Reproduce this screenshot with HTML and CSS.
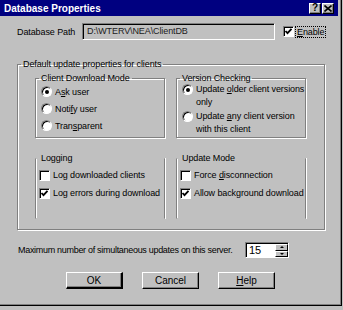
FILE: index.html
```html
<!DOCTYPE html>
<html>
<head>
  <link rel="stylesheet" href="styles.css">
</head>
<body>
  <div class="dialog">
    <div class="titlebar">
      <span class="title">Database Properties</span>
      <span class="tb-btn">?</span>
      <span class="tb-btn close-btn">
        <svg width="8" height="7" viewBox="0 0 8 7"><path d="M0.5 0.5 L7.5 6.5 M7.5 0.5 L0.5 6.5" stroke="#000" stroke-width="1.6"/></svg>
      </span>
    </div>

    <div class="path-row">
      <span class="path-label">Database Path</span>
      <div class="edit path-edit">D:\WTERV\NEA\ClientDB</div>
      <span class="check enable-check">
        <svg width="9" height="9" viewBox="0 0 9 9"><path d="M1.5 4 L3.5 6.2 L7.5 1.8" fill="none" stroke="#000" stroke-width="1.8"/></svg>
      </span>
      <span class="focus-label"><u>E</u>nable</span>
    </div>

    <fieldset class="group outer-group">
      <legend>Default update properties for clients</legend>
      <div class="group-grid">
        <fieldset class="group inner-group">
          <legend>Client Download Mode</legend>
          <div class="options">
            <div class="opt"><span class="radio on"></span><span>A<u>s</u>k user</span></div>
            <div class="opt"><span class="radio"></span><span>Noti<u>f</u>y user</span></div>
            <div class="opt"><span class="radio"></span><span>Tran<u>s</u>parent</span></div>
          </div>
        </fieldset>

        <fieldset class="group inner-group">
          <legend>Version Checking</legend>
          <div class="options">
            <div class="opt tall"><span class="radio on"></span><span>Update <u>o</u>lder client versions<br>only</span></div>
            <div class="opt tall"><span class="radio"></span><span>Update <u>a</u>ny client version<br>with this client</span></div>
          </div>
        </fieldset>

        <fieldset class="group inner-group open">
          <legend>Logging</legend>
          <div class="options checks">
            <div class="opt"><span class="check"></span><span>Log downloaded clients</span></div>
            <div class="opt">
              <span class="check">
                <svg width="9" height="9" viewBox="0 0 9 9"><path d="M1.5 4 L3.5 6.2 L7.5 1.8" fill="none" stroke="#000" stroke-width="1.8"/></svg>
              </span>
              <span>Log errors during download</span>
            </div>
          </div>
        </fieldset>

        <fieldset class="group inner-group open">
          <legend>Update Mode</legend>
          <div class="options checks">
            <div class="opt"><span class="check"></span><span>Force <u>d</u>isconnection</span></div>
            <div class="opt">
              <span class="check">
                <svg width="9" height="9" viewBox="0 0 9 9"><path d="M1.5 4 L3.5 6.2 L7.5 1.8" fill="none" stroke="#000" stroke-width="1.8"/></svg>
              </span>
              <span>Allow back<u>g</u>round download</span>
            </div>
          </div>
        </fieldset>
      </div>
    </fieldset>

    <div class="max-row">
      <span class="max-label">Maximum number of simultaneous updates on this server.</span>
      <div class="spin">
        <span class="spin-value">15</span>
        <span class="spin-btns">
          <span class="spin-btn"><i class="arrow up"></i></span>
          <span class="spin-btn"><i class="arrow down"></i></span>
        </span>
      </div>
    </div>

    <div class="button-row">
      <button class="btn default">OK</button>
      <button class="btn">Cancel</button>
      <button class="btn"><u>H</u>elp</button>
    </div>
  </div>
</body>
</html>
```

FILE: styles.css
```css
* {
  box-sizing: border-box;
}

body {
  margin: 0;
  background: #c0c0c0;
  font-family: "Liberation Sans", Arial, sans-serif;
  font-size: 9px;
  letter-spacing: -0.1px;
  color: #000;
}

.dialog {
  width: 342px;
  height: 306px;
  border-right: 1px solid #000;
  border-bottom: 1px solid #000;
  box-shadow: inset -1px -1px 0 #808080;
}

.titlebar {
  width: 338px;
  height: 16px;
  background: #000080;
  display: flex;
  align-items: center;
  padding: 0 4px;
}

.title {
  flex: 1;
  color: #fff;
  font-weight: bold;
  font-size: 10px;
  letter-spacing: 0;
}

.tb-btn {
  width: 12px;
  height: 11px;
  background: #c0c0c0;
  border: 1px solid;
  border-color: #fff #000 #000 #fff;
  box-shadow: inset -1px -1px 0 #808080;
  display: flex;
  align-items: center;
  justify-content: center;
  font-weight: bold;
  font-size: 10px;
  line-height: 1;
}

.close-btn {
  margin-left: 1px;
}

/* path row */
.path-row {
  display: flex;
  align-items: center;
  height: 17px;
  margin-top: 7px;
  padding-left: 17px;
  white-space: nowrap;
}

.path-label {
  width: 65px;
}

.edit {
  border: 1px solid;
  border-color: #808080 #fff #fff #808080;
  box-shadow: inset 1px 1px 0 #000;
}

.path-edit {
  width: 193px;
  height: 17px;
  padding-left: 4px;
  line-height: 15px;
  color: #202020;
}

.check {
  width: 11px;
  height: 11px;
  flex: none;
  background: #fff;
  border: 1px solid;
  border-color: #808080 #fff #fff #808080;
  box-shadow: inset 1px 1px 0 #000;
  display: flex;
  align-items: center;
  justify-content: center;
}

.enable-check {
  margin-left: 8px;
}

.focus-label {
  margin-left: 2px;
  padding: 0 1px;
  outline: 1px dotted #000;
}

/* group boxes */
.group {
  margin: 0;
  padding: 0;
  min-width: 0;
  border: 1px solid #808080;
  box-shadow: 1px 1px 0 #fff, inset 1px 1px 0 #fff;
}

.group legend {
  margin-left: 3px;
  padding: 0 2px;
  line-height: 10px;
}

.outer-group {
  width: 308px;
  height: 171px;
  margin: 19px 0 0 17px;
}

.group-grid {
  display: grid;
  grid-template-columns: 130px 130px;
  column-gap: 11px;
  row-gap: 15px;
  margin: 4px 0 0 17px;
}

.inner-group {
  height: 65px;
}

.inner-group.open {
  height: 66px;
  border-top-color: transparent;
  border-bottom-color: transparent;
  box-shadow: 1px 0 0 #fff, inset 1px 0 0 #fff;
}

.options {
  padding-left: 5px;
}

.opt {
  display: flex;
  align-items: center;
  gap: 3px;
  height: 17px;
  white-space: nowrap;
}

.opt.tall {
  align-items: flex-start;
  height: auto;
  line-height: 13px;
  margin-bottom: 1px;
}

.opt.tall .radio {
  margin-top: 1px;
}

.checks {
  padding-left: 3px;
  padding-top: 3px;
}

.checks .opt {
  height: 18px;
}

.radio {
  width: 11px;
  height: 11px;
  flex: none;
  border-radius: 50%;
  background: #fff;
  border: 1px solid;
  border-color: #808080 #fff #fff #808080;
  box-shadow: inset 1px 1px 0 #000;
  position: relative;
}

.radio.on::after {
  content: "";
  position: absolute;
  left: 3px;
  top: 3px;
  width: 4px;
  height: 4px;
  border-radius: 50%;
  background: #000;
}

/* bottom */
.max-row {
  display: flex;
  align-items: center;
  height: 16px;
  margin-top: 12px;
  padding-left: 18px;
}

.max-label {
  width: 227px;
  white-space: nowrap;
  letter-spacing: -0.3px;
}

.spin {
  width: 44px;
  height: 16px;
  display: flex;
  background: #fff;
  border: 1px solid;
  border-color: #808080 #fff #fff #808080;
  box-shadow: inset 1px 1px 0 #000;
}

.spin-value {
  flex: 1;
  padding: 1px 0 0 3px;
  line-height: 13px;
  font-size: 11px;
}

.spin-btns {
  width: 13px;
  display: flex;
  flex-direction: column;
  padding: 1px 0 0 0;
}

.spin-btn {
  flex: 1;
  background: #c0c0c0;
  border: 1px solid;
  border-color: #fff #000 #000 #fff;
  display: flex;
  align-items: center;
  justify-content: center;
}

.arrow {
  width: 0;
  height: 0;
  border-left: 2px solid transparent;
  border-right: 2px solid transparent;
}

.arrow.up {
  border-bottom: 2px solid #000;
}

.arrow.down {
  border-top: 2px solid #000;
}

.button-row {
  display: flex;
  gap: 19px;
  margin-top: 14px;
  padding-left: 66px;
}

.btn {
  width: 57px;
  height: 17px;
  padding: 0;
  font: inherit;
  font-size: 10px;
  color: #000;
  background: #c0c0c0;
  border: 1px solid;
  border-color: #fff #000 #000 #fff;
  box-shadow: inset -1px -1px 0 #808080;
}

.btn.default {
  border-right-width: 2px;
  border-bottom-width: 2px;
}
```
